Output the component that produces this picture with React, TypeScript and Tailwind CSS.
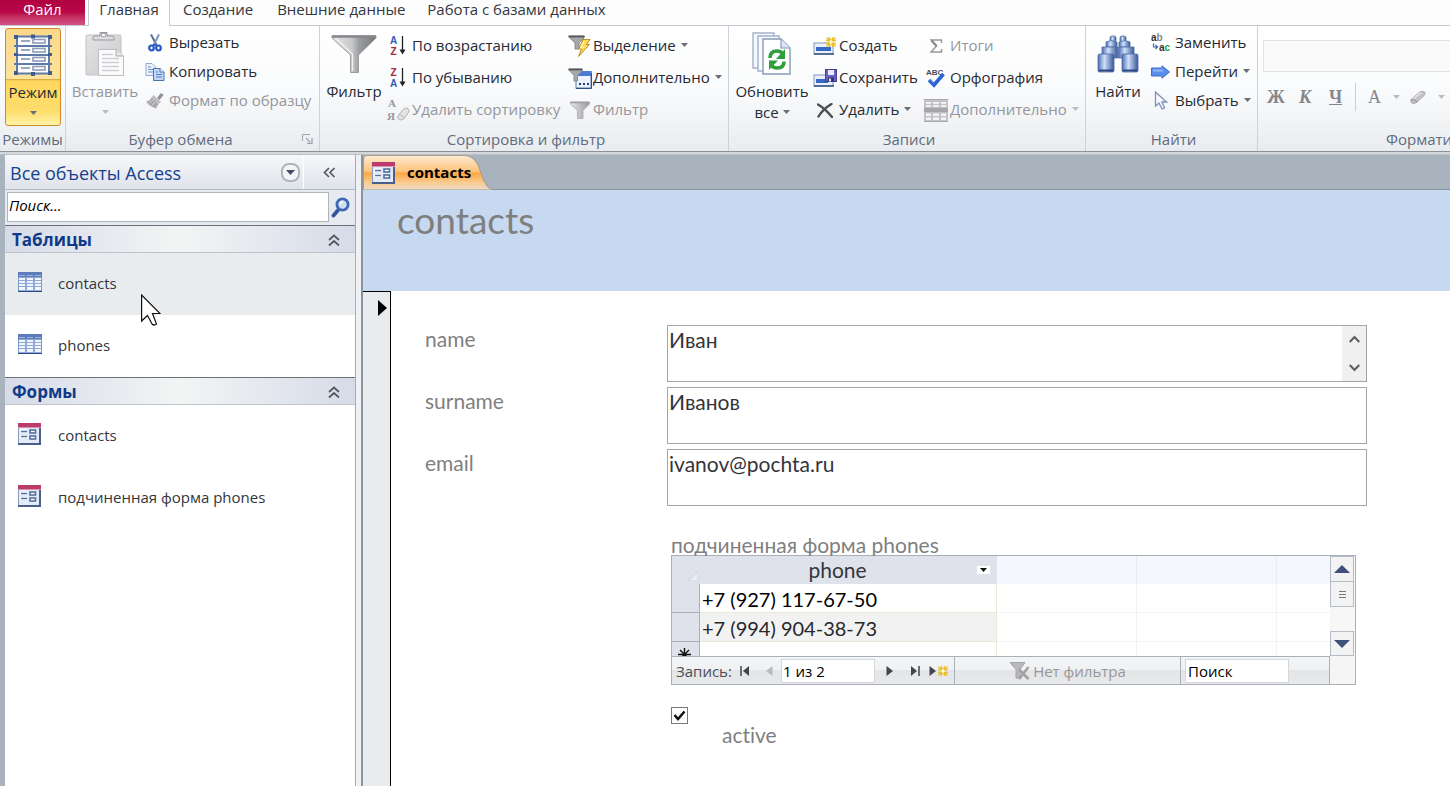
import type { ReactNode } from 'react';

type Icon = ReactNode;

const Caret = ({ dim = false }: { dim?: boolean }) => (
  <svg width="7" height="4" viewBox="0 0 7 4" className="shrink-0" aria-hidden="true">
    <path d="M0 0H7L3.5 4Z" fill={dim ? '#b9bcc2' : '#6a6d74'} />
  </svg>
);

const FormViewIcon = () => (
  <svg width="40" height="44" viewBox="0 0 40 44" aria-hidden="true">
    <rect x="4" y="3.500" width="32" height="37" fill="#fdfdfd" stroke="#5d7aa8" strokeWidth="2" />
    <path d="M1 13H39M1 22H39M1 31H39" stroke="#5d7aa8" strokeWidth="2" />
    <path d="M8 8H17M8 17H17M8 26H17M8 35H17" stroke="#9aa8bf" strokeWidth="1.8" />
    <g fill="#fff" stroke="#8d9cb8" strokeWidth="1.6">
      <rect x="20" y="6.500" width="12" height="3.500" />
      <rect x="20" y="15.500" width="12" height="3.500" />
      <rect x="20" y="24.500" width="12" height="3.500" />
      <rect x="20" y="33.500" width="12" height="3.500" />
    </g>
    <g fill="#3f5c8c">
      <rect x="1" y="2" width="4" height="4" />
      <rect x="18" y="1.500" width="4" height="4" />
      <rect x="35" y="2" width="4" height="4" />
      <rect x="1" y="20" width="4" height="3" />
      <rect x="35" y="20" width="4" height="3" />
      <rect x="1" y="38" width="4" height="4" />
      <rect x="18" y="39" width="4" height="4" />
      <rect x="35" y="38" width="4" height="4" />
    </g>
  </svg>
);

const PasteIcon = () => (
  <svg width="40" height="46" viewBox="0 0 40 46" aria-hidden="true">
    <defs>
      <linearGradient id="board" x1="0" y1="0" x2="1" y2="1">
        <stop offset="0" stopColor="#e4e3e5" />
        <stop offset="1" stopColor="#cac9cd" />
      </linearGradient>
    </defs>
    <rect x="1" y="4" width="35" height="40" rx="1.500" fill="url(#board)" stroke="#c2c1c5" />
    <path d="M8 9V6.500Q8 5 10 5H15V1.500H22V5H27Q29 5 29 6.500V9Z" fill="#dedde0" stroke="#98979c" />
    <rect x="16.500" y="2.500" width="4" height="3" fill="#fff" stroke="#a8a7ac" />
    <path d="M13.500 18.500H31L38.500 25V44.500H13.500Z" fill="#fbfbfc" stroke="#bdbcc1" />
    <path d="M31 18.500V25H38.500" fill="#e6e5e8" stroke="#aaa9ae" />
    <path d="M17 23.500H28M17 27.500H34M17 31.500H34M17 35.500H34M17 39.500H34" stroke="#cfced3" strokeWidth="1.300" />
  </svg>
);

const CutIcon = () => (
  <svg width="14" height="18" viewBox="0 0 14 18" aria-hidden="true">
    <path d="M3 .5L9 12" stroke="#5a6f98" strokeWidth="2" />
    <path d="M11 .5L5 12" stroke="#7e93b8" strokeWidth="2" />
    <ellipse cx="3.500" cy="14" rx="2.300" ry="2.500" fill="none" stroke="#2257c6" strokeWidth="2.200" />
    <ellipse cx="10.500" cy="14" rx="2.300" ry="2.500" fill="none" stroke="#2257c6" strokeWidth="2.200" />
    <path d="M5 11H9" stroke="#3a65b4" strokeWidth="2" />
  </svg>
);

const CopyIcon = () => (
  <svg width="20" height="18" viewBox="0 0 20 18" aria-hidden="true">
    <path d="M1 .5H7L10.500 4V12.500H1Z" fill="#eaf2fc" stroke="#8fa9d0" />
    <path d="M3 4H6M3 6.500H8M3 9H8" stroke="#6c93cf" />
    <path d="M8.500 5.500H15L19 9V17.500H8.500Z" fill="#c3d8f7" stroke="#4e71b0" />
    <path d="M15 5.500V9H19" fill="#fff" stroke="#4e71b0" />
    <path d="M11 9H13M11 11.500H17M11 14H17" stroke="#4d7cc8" />
  </svg>
);

const BrushIcon = () => (
  <svg width="18" height="16" viewBox="0 0 18 16" aria-hidden="true">
    <path d="M15 0L17.500 2L13.500 7L11 5Z" fill="#8f8f93" />
    <path d="M7.500 2L15 9L12.500 11L5.500 4.500Z" fill="#bdbdc1" />
    <path d="M5.500 4.500L12.500 11L10 15.500Q3.500 13.500 0 8.500Q4 8 5.500 4.500Z" fill="#a9a9ad" />
    <path d="M3.500 10L7 7M6 12L9 9" stroke="#d2d2d5" />
  </svg>
);

const FunnelIcon = () => (
  <svg width="46" height="40" viewBox="0 0 46 40" aria-hidden="true">
    <defs>
      <linearGradient id="funnel" x1="0" x2="1">
        <stop offset="0" stopColor="#e4e4e5" />
        <stop offset=".45" stopColor="#c8c9ca" />
        <stop offset=".62" stopColor="#9a9c9f" />
        <stop offset="1" stopColor="#77797c" />
      </linearGradient>
    </defs>
    <path d="M1 2H45V4L27.500 21V38.500H19.500V21L1 4Z" fill="url(#funnel)" stroke="#9c9ea1" />
    <path d="M1 2.500H45" stroke="#85878b" strokeWidth="2.500" />
    <path d="M5 4.500L21.500 20V37" fill="none" stroke="#f2f2f3" strokeWidth="1.200" />
  </svg>
);

const SmallFunnelIcon = () => (
  <svg width="20" height="18" viewBox="0 0 20 18" aria-hidden="true">
    <defs>
      <linearGradient id="smallFunnel" x1="0" x2="1">
        <stop offset="0" stopColor="#e6e5e8" />
        <stop offset="1" stopColor="#98979b" />
      </linearGradient>
    </defs>
    <path d="M.5 1H19.500V3L13 9.500V17.500H7.500V9.500L.5 3Z" fill="url(#smallFunnel)" stroke="#b3b2b6" />
    <path d="M.5 1.500H19.500" stroke="#a09fa3" strokeWidth="1.500" />
  </svg>
);

const SortIcon = ({ top, bottom, topClass, bottomClass }: { top: string; bottom: string; topClass: string; bottomClass: string }) => (
  <svg width="18" height="24" viewBox="0 0 18 24" aria-hidden="true" fontFamily="Liberation Sans, sans-serif" fontWeight="700" fontSize="10">
    <text x="4.500" y="10" textAnchor="middle" className={topClass}>{top}</text>
    <text x="4.500" y="21" textAnchor="middle" className={bottomClass}>{bottom}</text>
    <path d="M13.500 2V17" stroke="#222" strokeWidth="1.300" />
    <path d="M10.500 15.500H16.500L13.500 20.500Z" fill="#222" />
  </svg>
);

const ClearSortIcon = () => (
  <svg width="24" height="26" viewBox="0 0 24 26" aria-hidden="true" fontFamily="Liberation Serif, serif" fontWeight="700" fontSize="11">
    <text x="2" y="10" fill="#97979b">А</text>
    <text x="1" y="23" fill="#97979b">Я</text>
    <path d="M12 19L17 12.500Q20 10 22 11.500Q24 13 22.500 15.500L18 21.500Q15.500 24 13 22.500Q11 21.500 12 19Z" fill="#e3e2e5" stroke="#b2b1b6" />
    <path d="M13 17.500Q16 18 18.500 21" fill="none" stroke="#b8b7bb" />
  </svg>
);

const SelectionIcon = () => (
  <svg width="24" height="22" viewBox="0 0 24 22" aria-hidden="true">
    <path d="M1 1H16V3L11 8V14H7V8L1 2Z" fill="#a6a8ab" stroke="#8a8c8f" />
    <path d="M.5 1.500H16.500" stroke="#55575a" strokeWidth="1.800" />
    <path d="M15 4.500H22L18.500 9.500H21.500L10.500 21.500L13.500 14H10.500Z" fill="#ffd84e" stroke="#c08f22" />
    <path d="M16 6.500L13 12.500H16.500" fill="none" stroke="#fff3b5" strokeWidth="1.500" />
  </svg>
);

const AdvancedFilterIcon = () => (
  <svg width="24" height="21" viewBox="0 0 24 21" aria-hidden="true">
    <rect x="8" y="3.500" width="15" height="16.500" fill="#eef4fd" stroke="#5b7ab0" />
    <rect x="8" y="3" width="15.500" height="5" fill="#4a7cd6" />
    <path d="M8 20.500H23.500V5" fill="none" stroke="#2f4d87" />
    <path d="M1 1H14V3L9.500 7.500V13H6V7.500L1 2Z" fill="#a6a8ab" stroke="#8a8c8f" />
    <path d="M.5 1.500H14.500" stroke="#55575a" strokeWidth="1.800" />
    <path d="M11 16H13M15 16H17M19 16H21" stroke="#24406f" strokeWidth="2" />
  </svg>
);

const RefreshIcon = () => (
  <svg width="40" height="44" viewBox="0 0 40 44" aria-hidden="true">
    <path d="M1 1H22V36H1Z" fill="#f4f7fb" stroke="#a3b3ca" strokeWidth="1.400" />
    <path d="M6 4H27V39H6Z" fill="#f8fafc" stroke="#a3b3ca" strokeWidth="1.400" />
    <path d="M11 7H29L38 16V42H11Z" fill="#fff" stroke="#879ab8" strokeWidth="1.400" />
    <path d="M29 7V16H38" fill="#dbe5f3" stroke="#879ab8" strokeWidth="1.200" />
    <path d="M18 26Q18 19 25 19Q28.500 19 30.500 21.500" fill="none" stroke="#2f9e3d" strokeWidth="3.600" />
    <path d="M33 17V27H24Z" fill="#2f9e3d" />
    <path d="M32 29.500Q32 36 25 36Q21.500 36 19.500 33.500" fill="none" stroke="#2f9e3d" strokeWidth="3.600" />
    <path d="M17 38V28.500H26Z" fill="#2f9e3d" />
  </svg>
);

const Spark = ({ x, y }: { x: number; y: number }) => (
  <g transform={`translate(${x} ${y})`}>
    <rect x="2" y="2" width="6" height="6" fill="#f4cf4a" />
    <path d="M3.500 0V10M6.500 0V10M0 3.500H10M0 6.500H10M.5 .5L9.500 9.500M9.500 .5L.5 9.500" stroke="#eabf2e" strokeWidth="1.400" />
    <path d="M5 3V7M3 5H7" stroke="#fffbe0" strokeWidth="1.600" />
  </g>
);

const NewRecordIcon = () => (
  <svg width="24" height="18" viewBox="0 0 24 18" aria-hidden="true">
    <rect x="1" y="6" width="19" height="11" fill="#e9f0fa" stroke="#8398bb" />
    <rect x="3" y="10" width="15" height="4" fill="#3668c8" />
    <path d="M1 17H21" stroke="#34507f" strokeWidth="1.500" />
    <Spark x={13} y={0} />
  </svg>
);

const SaveRecordIcon = () => (
  <svg width="24" height="18" viewBox="0 0 24 18" aria-hidden="true">
    <rect x="1" y="6" width="19" height="11" fill="#e9f0fa" stroke="#8398bb" />
    <rect x="3" y="10" width="12" height="4" fill="#3668c8" />
    <path d="M1 17H21" stroke="#34507f" strokeWidth="1.500" />
    <rect x="12.500" y=".5" width="11" height="12" fill="#6a62c2" stroke="#453e94" />
    <rect x="15" y="1" width="6" height="5" fill="#eceafc" />
    <rect x="15" y="8.500" width="6" height="4" fill="#35306f" />
    <rect x="16" y="9.500" width="2" height="3" fill="#e6e4f8" />
  </svg>
);

const DeleteIcon = () => (
  <svg width="16" height="15" viewBox="0 0 16 15" aria-hidden="true">
    <path d="M1 1.500Q8 5.500 15 14M14.500 1Q6 6 1.500 13.500" fill="none" stroke="#4b4d51" strokeWidth="2.400" strokeLinecap="round" />
  </svg>
);

const SigmaIcon = () => (
  <svg width="14" height="14" viewBox="0 0 14 14" aria-hidden="true">
    <path d="M12.500 4V1H2L7.500 7L2 13H12.500V10" fill="none" stroke="#97989d" strokeWidth="1.400" />
    <path d="M2.500 1.500L7.500 7" stroke="#8b8c91" strokeWidth="2.400" />
  </svg>
);

const SpellingIcon = () => (
  <svg width="20" height="20" viewBox="0 0 20 20" aria-hidden="true">
    <text x="0" y="6.500" fontFamily="Liberation Sans, sans-serif" fontWeight="700" fontSize="8" fill="#4d4f54">ABC</text>
    <path d="M3 12L8 17L17.500 6" fill="none" stroke="#2b63cf" strokeWidth="3.600" />
    <path d="M4 11.500L8 15.500" stroke="#7aa3ee" />
  </svg>
);

const MoreRecordsIcon = () => (
  <svg width="24" height="23" viewBox="0 0 24 23" aria-hidden="true">
    <rect width="24" height="23" fill="#c3c2c6" />
    <path d="M0 .5H24M0 22.500H24" stroke="#a9a8ac" />
    <path d="M2 3H7V5H2ZM9 3H15V5H9ZM17 3H22V5H17ZM2 6H7V8H2ZM9 6H15V8H9ZM17 6H22V8H17Z" fill="#efeef0" />
    <path d="M0 11H24" stroke="#a5a4a8" strokeWidth="4" />
    <path d="M2 14.500H7V17H2ZM9 14.500H15V17H9ZM17 14.500H22V17H17ZM2 18.500H7V21H2ZM9 18.500H15V21H9ZM17 18.500H22V21H17Z" fill="#f4f3f5" />
  </svg>
);

const BinocularsIcon = () => (
  <svg width="42" height="38" viewBox="0 0 42 38" aria-hidden="true">
    <defs>
      <linearGradient id="tube" x1="0" x2="1">
        <stop offset="0" stopColor="#4a6db0" />
        <stop offset=".4" stopColor="#cfe0fa" />
        <stop offset="1" stopColor="#38589a" />
      </linearGradient>
    </defs>
    <g fill="url(#tube)" stroke="#4c6aa4" strokeWidth=".8">
      <rect x="13" y="1" width="6" height="6" rx="2" />
      <rect x="23" y="1" width="6" height="6" rx="2" />
      <path d="M9 7Q14 4 20 7V12H9Z" />
      <path d="M22 7Q28 4 33 7V12H22Z" />
      <path d="M5 12H20.500V23H17V20H5Z" />
      <path d="M21.500 12H37V20H25V23H21.500Z" />
      <rect x="1" y="19" width="16" height="18" rx="1.500" />
      <rect x="25" y="19" width="16" height="18" rx="1.500" />
    </g>
    <path d="M2 35.500H16M26 35.500H40" stroke="#2c4884" strokeWidth="2" />
  </svg>
);

const ReplaceIcon = () => (
  <svg width="20" height="20" viewBox="0 0 20 20" aria-hidden="true" fontFamily="Liberation Sans, sans-serif" fontWeight="700" fontSize="10">
    <text x="0" y="8" fill="#333">a<tspan fill="#888">b</tspan></text>
    <text x="8" y="18" fill="#333">a<tspan fill="#18a33a">c</tspan></text>
    <path d="M2.500 10.500V14H6M4.500 12L6.500 14L4.500 16" fill="none" stroke="#3e63b0" strokeWidth="1.200" />
  </svg>
);

const GoToIcon = () => (
  <svg width="19" height="14" viewBox="0 0 19 14" aria-hidden="true">
    <path d="M.5 3H11V.8L18.500 7L11 13.200V11H.5Z" fill="#5a8eec" stroke="#3c6cc6" />
    <path d="M2 5.500H12" stroke="#93b8f7" strokeWidth="2" />
  </svg>
);

const PointerIcon = () => (
  <svg width="14" height="19" viewBox="0 0 14 19" aria-hidden="true">
    <path d="M1.500 1V15L5 12L8 18L10.500 17L8 11H12.500Z" fill="#f6f9fd" stroke="#7d92b6" strokeWidth="1.300" />
  </svg>
);

const EraserIcon = () => (
  <svg width="16" height="13" viewBox="0 0 16 13" aria-hidden="true">
    <path d="M1 8.500L10 1Q12 0 14.500 1Q16 2 14 4.500L6.500 11.500Q4 13 2 12Q0 11 1 8.500Z" fill="#c4c4c8" stroke="#a3a3a7" />
    <path d="M3 8L11 1.500" stroke="#e9e9eb" strokeWidth="1.500" />
    <path d="M1.500 9Q5 8 7 11" fill="none" stroke="#8d8d91" />
  </svg>
);

const TableIcon = () => (
  <svg width="24" height="20" viewBox="0 0 24 20" className="shrink-0" aria-hidden="true">
    <rect width="24" height="20" fill="#8fa9d8" />
    <rect width="24" height="5" fill="#5b7bbb" />
    <path d="M1 3.500H7M9 3.500H15M17 3.500H23" stroke="#9db5e0" />
    <path d="M1 6H7V8H1ZM9 6H15V8H9ZM17 6H23V8H17ZM1 9H7V11H1ZM9 9H15V11H9ZM17 9H23V11H17ZM1 12H7V14H1ZM9 12H15V14H9ZM17 12H23V14H17ZM1 15H7V18H1ZM9 15H15V18H9ZM17 15H23V18H17Z" fill="#f1f6fe" />
    <path d="M0 19.500H24" stroke="#2f4a86" />
    <path d="M.5 5V19M23.500 5V19" stroke="#7b97cb" />
  </svg>
);

const FormIcon = () => (
  <svg width="23" height="22" viewBox="0 0 23 22" className="shrink-0" aria-hidden="true">
    <rect x=".5" y=".5" width="22" height="21" fill="#e3ebf8" stroke="#8a9cc0" />
    <rect width="23" height="5" fill="#b93c6a" />
    <path d="M0 4.500H23" stroke="#dd8fac" />
    <path d="M2 8H9M2 13.500H9" stroke="#fff" strokeWidth="3" />
    <path d="M3 8.500H9M3 13.500H9" stroke="#54709f" strokeWidth="1.600" />
    <rect x="12" y="7" width="5.500" height="3" fill="#fff" stroke="#54709f" strokeWidth="1.600" />
    <rect x="12" y="13" width="5.500" height="3" fill="#fff" stroke="#54709f" strokeWidth="1.600" />
    <path d="M22 5V21H0" fill="none" stroke="#4a6088" strokeWidth="2" />
  </svg>
);

const SearchIcon = () => (
  <svg width="19" height="21" viewBox="0 0 19 21" aria-hidden="true">
    <path d="M8 12L2.500 18.500" stroke="#35559b" strokeWidth="3.800" strokeLinecap="round" />
    <circle cx="11.500" cy="7.500" r="5.600" fill="#cfe0f6" stroke="#3f68b4" strokeWidth="2.800" />
    <path d="M9 7Q9.500 4.500 12 4.500" fill="none" stroke="#fff" strokeWidth="1.400" />
  </svg>
);

const CollapseIcon = () => (
  <svg width="12" height="13" viewBox="0 0 12 13" aria-hidden="true">
    <path d="M1 6L6 1.500L11 6M1 11.500L6 7L11 11.500" fill="none" stroke="#55585e" strokeWidth="1.700" />
  </svg>
);

function BigButton({ icon, label, tail, dim, className = '' }: { icon: Icon; label: string; tail: ReactNode; dim?: boolean; className?: string }) {
  return (
    <button className={`flex h-[98px] shrink-0 flex-col items-center whitespace-nowrap leading-[22px] ${dim ? 'text-[#94969c]' : 'text-[#262a33]'} ${className}`}>
      <span className="flex h-[52px] items-center">{icon}</span>
      <span>{label}</span>
      <span className="flex h-[20px] items-center gap-1">{tail}</span>
    </button>
  );
}

function SmallButton({ icon, iconBox, label, caret, dim, tall }: { icon: Icon; iconBox: string; label: string; caret?: boolean; dim?: boolean; tall?: boolean }) {
  return (
    <button className={`flex items-center whitespace-nowrap ${tall ? 'h-8' : 'h-[29px]'} ${dim ? 'text-[#94969c]' : 'text-[#262a33]'}`}>
      <span className={`flex shrink-0 items-center justify-center ${iconBox}`}>{icon}</span>
      <span className="pb-[2px] leading-[22px]">{label}</span>
      {caret && <span className="ml-[5px] pb-[2px]"><Caret dim={dim} /></span>}
    </button>
  );
}

function Group({ title, className, children, launcher }: { title: string; className: string; children: ReactNode; launcher?: boolean }) {
  return (
    <section className={`flex shrink-0 flex-col border-r border-[#cdd1d8] ${className}`}>
      <div className="flex h-[103px] items-start pt-[2px]">{children}</div>
      <div className={`relative flex h-5 items-center justify-center whitespace-nowrap text-[#606b80] ${launcher ? 'pr-[29px]' : ''}`}>
        {title}
        {launcher && (
          <button aria-label="Буфер обмена" className="absolute right-[6px] top-[5px]">
            <svg width="11" height="10" viewBox="0 0 11 10" aria-hidden="true">
              <path d="M.5 7V.5H8" fill="none" stroke="#a0a5b0" />
              <path d="M4 4L8 8M10 4V9.500H5" fill="none" stroke="#a0a5b0" strokeWidth="1.300" />
            </svg>
          </button>
        )}
      </div>
    </section>
  );
}

function Ribbon() {
  return (
    <div className="flex h-[125px] overflow-hidden bg-linear-to-b from-white via-[#fafbfc] to-[#e9ecef]">
      <Group title="Режимы" className="w-[66px]">
        <BigButton
          icon={<FormViewIcon />}
          label="Режим"
          tail={<Caret />}
          className="ml-[5px] w-14 rounded-[3px] border border-[#d08a2c] bg-[linear-gradient(#fbd88a_0%,#fde39c_52%,#c99a3f_52%,#ffd75e_54%,#fedd6c_85%,#fff3a8_100%)]"
        />
      </Group>
      <Group title="Буфер обмена" className="w-[254px] pl-[5px]" launcher>
        <BigButton icon={<PasteIcon />} label="Вставить" tail={<Caret dim />} dim className="w-[68px]" />
        <div className="ml-[5px] flex flex-col items-start">
          <SmallButton icon={<CutIcon />} iconBox="w-[25px] pr-1" label="Вырезать" />
          <SmallButton icon={<CopyIcon />} iconBox="w-[25px] pr-1" label="Копировать" />
          <SmallButton icon={<BrushIcon />} iconBox="w-[25px] pr-1" label="Формат по образцу" dim />
        </div>
      </Group>
      <Group title="Сортировка и фильтр" className="w-[409px] pl-1">
        <BigButton icon={<FunnelIcon />} label="Фильтр" tail={null} className="w-[60px]" />
        <div className="flex w-[182px] flex-col items-start pt-[2px]">
          <SmallButton tall icon={<SortIcon top="A" bottom="Z" topClass="fill-[#2f5cb0]" bottomClass="fill-[#a32834]" />} iconBox="w-7" label="По возрастанию" />
          <SmallButton tall icon={<SortIcon top="Z" bottom="A" topClass="fill-[#a32834]" bottomClass="fill-[#2f5cb0]" />} iconBox="w-7" label="По убыванию" />
          <SmallButton tall icon={<ClearSortIcon />} iconBox="w-7" label="Удалить сортировку" dim />
        </div>
        <div className="flex flex-col items-start pt-[2px]">
          <SmallButton tall icon={<SelectionIcon />} iconBox="w-[27px]" label="Выделение" caret />
          <SmallButton tall icon={<AdvancedFilterIcon />} iconBox="w-[27px]" label="Дополнительно" caret />
          <SmallButton tall icon={<SmallFunnelIcon />} iconBox="w-[27px]" label="Фильтр" dim />
        </div>
      </Group>
      <Group title="Записи" className="w-[357px] pl-1">
        <BigButton icon={<RefreshIcon />} label="Обновить" tail={<>все <Caret /></>} className="w-[78px]" />
        <div className="flex w-[113px] flex-col items-start pt-[2px]">
          <SmallButton tall icon={<NewRecordIcon />} iconBox="w-7" label="Создать" />
          <SmallButton tall icon={<SaveRecordIcon />} iconBox="w-7" label="Сохранить" />
          <SmallButton tall icon={<DeleteIcon />} iconBox="w-7" label="Удалить" caret />
        </div>
        <div className="flex flex-col items-start pt-[2px]">
          <SmallButton tall icon={<SigmaIcon />} iconBox="w-[26px] pr-[2px]" label="Итоги" dim />
          <SmallButton tall icon={<SpellingIcon />} iconBox="w-[26px] pr-[2px]" label="Орфография" />
          <SmallButton tall icon={<MoreRecordsIcon />} iconBox="w-[26px] pr-[2px]" label="Дополнительно" caret dim />
        </div>
      </Group>
      <Group title="Найти" className="w-[172px] pl-1">
        <BigButton icon={<BinocularsIcon />} label="Найти" tail={null} className="w-14" />
        <div className="ml-[2px] flex flex-col items-start">
          <SmallButton icon={<ReplaceIcon />} iconBox="w-[27px] pr-[2px]" label="Заменить" />
          <SmallButton icon={<GoToIcon />} iconBox="w-[27px] pr-[2px]" label="Перейти" caret />
          <SmallButton icon={<PointerIcon />} iconBox="w-[27px] pr-[2px]" label="Выбрать" caret />
        </div>
      </Group>
      <section className="flex min-w-0 flex-1 flex-col overflow-hidden pl-[5px]">
        <div className="h-[103px] pt-[14px]">
          <div className="flex h-8 items-center justify-end border border-r-0 border-[#dfe2e7] bg-[#fafafb]">
            <select aria-label="Шрифт" disabled className="h-full w-full appearance-none bg-transparent" />
          </div>
          <div className="flex h-[50px] items-center whitespace-nowrap font-['Liberation_Serif',serif] text-lg text-[#85868b]">
            <button className="w-8 pl-1 text-left font-bold">Ж</button>
            <button className="w-[30px] pl-1 text-left font-bold italic">К</button>
            <button className="w-[30px] pl-1 text-left font-bold underline">Ч</button>
            <span className="h-7 w-px bg-[#c9cdd4]" />
            <button className="ml-3 flex items-center gap-3">A <Caret dim /></button>
            <button aria-label="Заливка" className="ml-[10px] flex items-center gap-3"><EraserIcon /><Caret dim /></button>
          </div>
        </div>
        <div className="flex h-5 items-center whitespace-nowrap pl-[123px] text-[#606b80]">Форматирование</div>
      </section>
    </div>
  );
}

function SectionHeader({ title }: { title: string }) {
  return (
    <button className="flex h-7 w-full items-center justify-between border-t border-b border-t-[#6d7076] border-b-[#bfc4cc] bg-linear-to-r from-[#d6dbe8] via-[#f3f4f4] to-[#d6dbe8] pl-[7px] pr-[15px] pt-[2px] text-[17px] font-bold text-[#0f3a8a]">
      {title}
      <CollapseIcon />
    </button>
  );
}

function NavItem({ icon, label, active }: { icon: Icon; label: string; active?: boolean }) {
  return (
    <a href="#" className={`flex h-[62px] items-center pb-[2px] pl-[13px] text-[#33363b] ${active ? 'bg-[#e8ecef]' : 'bg-white'}`}>
      <span className="w-10 pb-[2px]">{icon}</span>
      {label}
    </a>
  );
}

function NavPane() {
  return (
    <aside className="relative ml-[5px] flex w-[351px] shrink-0 flex-col border-r border-[#a3adb8] bg-white">
      <div className="flex h-[35px] items-center border-b border-[#b4bac4] bg-linear-to-b from-[#f7f8fa] to-[#dfe3ea] pl-[5px]">
        <h2 className="flex-1 pt-[2px] text-lg text-[#14418f]">Все объекты Access</h2>
        <button aria-label="Показать" className="mr-[3px]">
          <svg width="19" height="19" viewBox="0 0 19 19" aria-hidden="true">
            <rect x="1" y="1" width="17" height="17" rx="7" fill="#f4f5f6" stroke="#b0b3b8" strokeWidth="2" />
            <path d="M5 7H14L9.500 12Z" fill="#4a4a62" />
          </svg>
        </button>
        <button aria-label="Свернуть" className="flex h-full w-[52px] items-center justify-center border-l border-white">
          <svg width="13" height="11" viewBox="0 0 13 11" aria-hidden="true">
            <path d="M6 1L1.500 5.500L6 10M11.500 1L7 5.500L11.500 10" fill="none" stroke="#55585e" strokeWidth="1.700" />
          </svg>
        </button>
      </div>
      <div className="flex h-[35px] items-start bg-[#e6e9f0] pl-[2px] pt-[2px]">
        <input aria-label="Поиск" placeholder="Поиск..." className="h-[30px] min-w-0 flex-1 border border-[#b0b5bd] bg-white px-[1px] pb-1 text-[15px] italic text-black outline-none placeholder:text-black" />
        <button aria-label="Найти объект" className="flex h-[30px] w-[26px] items-center justify-center pr-1"><SearchIcon /></button>
      </div>
      <SectionHeader title="Таблицы" />
      <NavItem icon={<TableIcon />} label="contacts" active />
      <NavItem icon={<TableIcon />} label="phones" />
      <SectionHeader title="Формы" />
      <NavItem icon={<FormIcon />} label="contacts" />
      <NavItem icon={<FormIcon />} label="подчиненная форма phones" />
      <svg width="20" height="32" viewBox="0 0 20 32" className="absolute left-[136px] top-[139px]" aria-hidden="true">
        <path d="M.6 1V27L6.500 21.500L11 30Q13 32 15.500 30L11.500 19.500H19Z" fill="#fff" stroke="#111" strokeWidth="1.200" />
      </svg>
    </aside>
  );
}

const fields = [
  { id: 'name', value: 'Иван', scroll: true },
  { id: 'surname', value: 'Иванов', scroll: false },
  { id: 'email', value: 'ivanov@pochta.ru', scroll: false },
];

function Field({ id, value, scroll }: { id: string; value: string; scroll: boolean }) {
  return (
    <div className="grid grid-cols-[242px_minmax(0,1fr)]">
      <label htmlFor={id} className="text-[#7f7f7f]">{id}</label>
      <div className="flex h-[57px] border border-[#a5a5a5]">
        <textarea id={id} defaultValue={value} className="min-w-0 flex-1 resize-none overflow-hidden bg-white px-[1px] text-[#33353a] outline-none" />
        {scroll && (
          <div className="flex w-6 flex-col items-center justify-between bg-[#f0f0f0] py-[9px]">
            <button aria-label="Вверх">
              <svg width="11" height="9" viewBox="0 0 11 9" className="block" aria-hidden="true"><path d="M.7 7L5.500 2L10.300 7" fill="none" stroke="#606060" strokeWidth="2.200" /></svg>
            </button>
            <button aria-label="Вниз">
              <svg width="11" height="9" viewBox="0 0 11 9" className="block" aria-hidden="true"><path d="M.7 2L5.500 7L10.300 2" fill="none" stroke="#606060" strokeWidth="2.200" /></svg>
            </button>
          </div>
        )}
      </div>
    </div>
  );
}

const phones = ['+7 (927) 117-67-50', '+7 (994) 904-38-73'];

function PhoneGrid() {
  return (
    <table className="w-full table-fixed border-separate border-spacing-0">
      <colgroup>
        <col className="w-7" />
        <col className="w-[297px]" />
        <col className="w-[140px]" />
        <col className="w-[140px]" />
        <col />
      </colgroup>
      <thead>
        <tr className="h-7">
          <th className="bg-[#dfe2ea] p-0" aria-label="Выделить все">
            <svg width="10" height="10" viewBox="0 0 10 10" className="ml-4 mt-3 block" aria-hidden="true"><path d="M10 0V10H0Z" fill="#e9eef4" stroke="#c5d3dc" /></svg>
          </th>
          <th className="bg-[#dfe2ea] p-0 font-normal text-[#33353a]">
            <span className="flex h-7 items-center">
              <span className="flex-1 pr-[2px] text-center">phone</span>
              <button aria-label="Сортировка phone" className="mr-[7px] flex h-2 w-[13px] items-center justify-center bg-white">
                <svg width="7" height="4" viewBox="0 0 7 4" aria-hidden="true"><path d="M0 0H7L3.500 4Z" fill="#111" /></svg>
              </button>
            </span>
          </th>
          <td className="border-r border-[#e9eaf0] bg-[#f6f7fe] p-0" />
          <td className="border-r border-[#e9eaf0] bg-[#f6f7fe] p-0" />
          <td className="bg-[#f6f7fe] p-0" />
        </tr>
      </thead>
      <tbody>
        {phones.map((phone, i) => (
          <tr key={phone} className="h-[29px]">
            <td className="border-b border-r border-[#aab0ba] bg-[#dfe2ea] p-0" />
            <td className={`border-b border-r border-[#ece8dc] p-0 pl-[2px] pt-[2px] text-xl leading-[26px] ${i % 2 ? 'bg-[#f2f2f2] text-[#26282c]' : 'bg-white text-black'}`}>{phone}</td>
            <td className="border-b border-r border-[#f3f3f3]" />
            <td className="border-b border-r border-[#f3f3f3]" />
            <td className="border-b border-[#f3f3f3]" />
          </tr>
        ))}
        <tr className="h-[29px]">
          <td className="border-r border-[#aab0ba] bg-[#dfe2ea] p-0 align-top">
            <svg width="13" height="13" viewBox="0 0 13 13" className="ml-[6px] mt-[6px] block" aria-hidden="true"><path d="M6.500 0V13M0 6.500H13M2 2L11 11M11 2L2 11" stroke="#111" strokeWidth="1.400" /></svg>
          </td>
          <td className="border-r border-[#ece8dc]" />
          <td className="border-r border-[#f3f3f3]" />
          <td className="border-r border-[#f3f3f3]" />
          <td />
        </tr>
      </tbody>
    </table>
  );
}

function RecordBar() {
  return (
    <div className="flex h-7 flex-1 items-center whitespace-nowrap border-r border-t border-[#aab0b8] bg-[linear-gradient(#f3f4f6_0%,#f0f1f3_50%,#e4e5e7_50%,#e8e9eb_100%)] font-['Open_Sans','Noto_Sans',sans-serif] text-[15px] text-[#4c5058]">
      <div className="flex h-full w-[283px] shrink-0 items-center border-r border-[#aab0b8] pl-1">
        <span className="w-16">Запись:</span>
        <button aria-label="Первая запись" className="w-[26px]">
          <svg width="10" height="10" viewBox="0 0 10 10" aria-hidden="true"><path d="M1 0V10" stroke="#44464c" strokeWidth="1.500" /><path d="M9 0V10L3 5Z" fill="#44464c" /></svg>
        </button>
        <button aria-label="Предыдущая запись" className="w-[15px]">
          <svg width="7" height="10" viewBox="0 0 7 10" aria-hidden="true"><path d="M6.500 0V10L0 5Z" fill="#b9bbc0" /></svg>
        </button>
        <input aria-label="Номер записи" defaultValue="1 из 2" className="h-6 w-[94px] border border-[#d5d7dc] bg-white px-[1px] text-[15px] text-black outline-none" />
        <button aria-label="Следующая запись" className="ml-[11px] w-6">
          <svg width="7" height="10" viewBox="0 0 7 10" aria-hidden="true"><path d="M.5 0V10L7 5Z" fill="#44464c" /></svg>
        </button>
        <button aria-label="Последняя запись" className="w-[19px]">
          <svg width="10" height="10" viewBox="0 0 10 10" aria-hidden="true"><path d="M9 0V10" stroke="#44464c" strokeWidth="1.500" /><path d="M1 0V10L7 5Z" fill="#44464c" /></svg>
        </button>
        <button aria-label="Новая запись">
          <svg width="20" height="12" viewBox="0 0 20 12" aria-hidden="true"><path d="M.5 1V11L7 6Z" fill="#44464c" /><Spark x={9} y={1} /></svg>
        </button>
      </div>
      <div className="flex h-full w-[226px] shrink-0 items-center justify-center gap-[2px] border-r border-[#aab0b8] text-[#96989d]">
        <svg width="22" height="19" viewBox="0 0 22 19" aria-hidden="true">
          <path d="M1 1.500H16L11 8.500V17H7V8.500Z" fill="#b9b9bc" stroke="#a3a4a8" />
          <path d="M10 8.500L19.500 18M19.500 6L10 18" stroke="#a0a1a5" strokeWidth="2.600" />
        </svg>
        Нет фильтра
      </div>
      <input aria-label="Поиск записи" defaultValue="Поиск" className="ml-1 h-6 w-[104px] border border-[#d5d7dc] bg-white px-[2px] text-black outline-none" />
    </div>
  );
}

function Subform() {
  return (
    <div className="ml-[246px] mr-[11px] mt-7">
      <h3 className="h-[21px] leading-[21px] text-[#7f7f7f]">подчиненная форма phones</h3>
      <div className="border border-[#aab0b8]">
        <div className="flex h-[100px] overflow-hidden">
          <div className="min-w-0 flex-1"><PhoneGrid /></div>
          <div className="flex w-[25px] shrink-0 flex-col bg-[#f7f7f8] pr-px">
            <button aria-label="Прокрутить вверх" className="flex h-[26px] items-center justify-center border border-[#b4bcc8] bg-[#f3f3f4]">
              <svg width="16" height="8" viewBox="0 0 16 8" aria-hidden="true"><path d="M8 0L16 8H0Z" fill="#40507c" /></svg>
            </button>
            <div className="flex h-[25px] flex-col items-center justify-center gap-[2px] border border-t-0 border-[#b4bcc8] bg-[#f3f3f4]">
              <span className="h-px w-[7px] bg-[#77787c]" />
              <span className="h-px w-[7px] bg-[#77787c]" />
              <span className="h-px w-[7px] bg-[#77787c]" />
            </div>
            <button aria-label="Прокрутить вниз" className="mt-auto flex h-[25px] items-center justify-center border border-[#b4bcc8] bg-[#f3f3f4]">
              <svg width="16" height="8" viewBox="0 0 16 8" aria-hidden="true"><path d="M0 0H16L8 8Z" fill="#40507c" /></svg>
            </button>
          </div>
        </div>
        <div className="flex bg-[#f5f5f6]">
          <RecordBar />
          <div className="w-[25px]" />
        </div>
      </div>
    </div>
  );
}

function Document() {
  return (
    <main className="flex min-w-0 flex-1 flex-col">
      <div className="flex h-[35px] border-b border-[#8b959f] bg-[#a9b3bd]">
        <button className="relative flex h-[35px] w-[130px] items-center gap-3 pl-[9px] text-[15px] font-bold text-black">
          <svg width="130" height="35" viewBox="0 0 130 35" className="absolute inset-0" aria-hidden="true">
            <defs>
              <linearGradient id="tab" x1="0" y1="0" x2="0" y2="1">
                <stop offset="0" stopColor="#fdebd2" />
                <stop offset=".45" stopColor="#fdc47c" />
                <stop offset=".52" stopColor="#fba944" />
                <stop offset=".8" stopColor="#f9cd96" />
                <stop offset="1" stopColor="#e9d9cc" />
              </linearGradient>
            </defs>
            <path d="M.5 35V4Q.5 .5 4 .5H101Q110 .5 115 10L121 26Q125 34.500 130 34.500V35Z" fill="url(#tab)" stroke="#a99a8a" />
          </svg>
          <span className="relative"><FormIcon /></span>
          <span className="relative">contacts</span>
        </button>
      </div>
      <header className="h-[101px] bg-[#c7d9f1] pl-[34px] pt-[6px] font-['Lato','Open_Sans',sans-serif] text-[37px] leading-[48px] text-[#7f7f7f]">
        <h1>contacts</h1>
      </header>
      <div className="flex flex-1">
        <button aria-label="Текущая запись" className="flex w-7 shrink-0 items-start justify-end border-r border-t border-black bg-[#e8ecef] pr-[3px] pt-2">
          <svg width="9" height="16" viewBox="0 0 9 16" aria-hidden="true"><path d="M0 0L9 8L0 16Z" fill="#000" /></svg>
        </button>
        <form className="min-w-0 flex-1 bg-white pl-[34px] pr-[83px] pt-[34px] font-['Lato','Open_Sans',sans-serif] text-[21px] leading-[28px] [font-variant-ligatures:none]">
          <div className="flex flex-col gap-[5px]">
            {fields.map((f) => <Field key={f.id} {...f} />)}
          </div>
          <Subform />
          <div className="ml-[246px] mt-[22px] flex items-start">
            <span className="relative h-[17px] w-[17px]">
              <input id="active" type="checkbox" defaultChecked className="peer block h-[17px] w-[17px] appearance-none border border-[#77797e] bg-white" />
              <svg width="17" height="17" viewBox="0 0 17 17" className="pointer-events-none absolute inset-0 hidden peer-checked:block" aria-hidden="true"><path d="M3.500 8L7 12L13.500 4.500" fill="none" stroke="#111" strokeWidth="2.500" /></svg>
            </span>
            <label htmlFor="active" className="ml-[34px] pt-[14px] text-[#7f7f7f]">active</label>
          </div>
        </form>
      </div>
    </main>
  );
}

export default function App() {
  return (
    <div className="flex min-h-screen flex-col overflow-hidden bg-[#a9b3bd] font-['Open_Sans','Noto_Sans',sans-serif] text-[15px]">
      <nav className="flex h-[26px] items-start border-b border-[#c5cad0] bg-[#fdfdfd] text-[#33373f]">
        <button className="mr-[3px] h-[25px] w-[85px] bg-linear-to-b from-[#b0003f] via-[#b8094a] to-[#d25386] pb-[7px] leading-[18px] text-white">Файл</button>
        <button className="h-[26px] w-[82px] border-x border-[#c5cad0] bg-white pb-2 leading-[18px]">Главная</button>
        <button className="ml-[13px] h-[25px] pb-[7px] leading-[18px]">Создание</button>
        <button className="ml-6 h-[25px] pb-[7px] leading-[18px]">Внешние данные</button>
        <button className="ml-[22px] h-[25px] pb-[7px] leading-[18px]">Работа с базами данных</button>
      </nav>
      <Ribbon />
      <div className="h-1 border-b border-t border-b-[#b9c0c7] border-t-[#8b9197] bg-[#d4d8db]" />
      <div className="flex flex-1">
        <NavPane />
        <div className="w-[7px] shrink-0 border-r-2 border-[#8a939e] bg-[#eff1f4]" />
        <Document />
      </div>
    </div>
  );
}
